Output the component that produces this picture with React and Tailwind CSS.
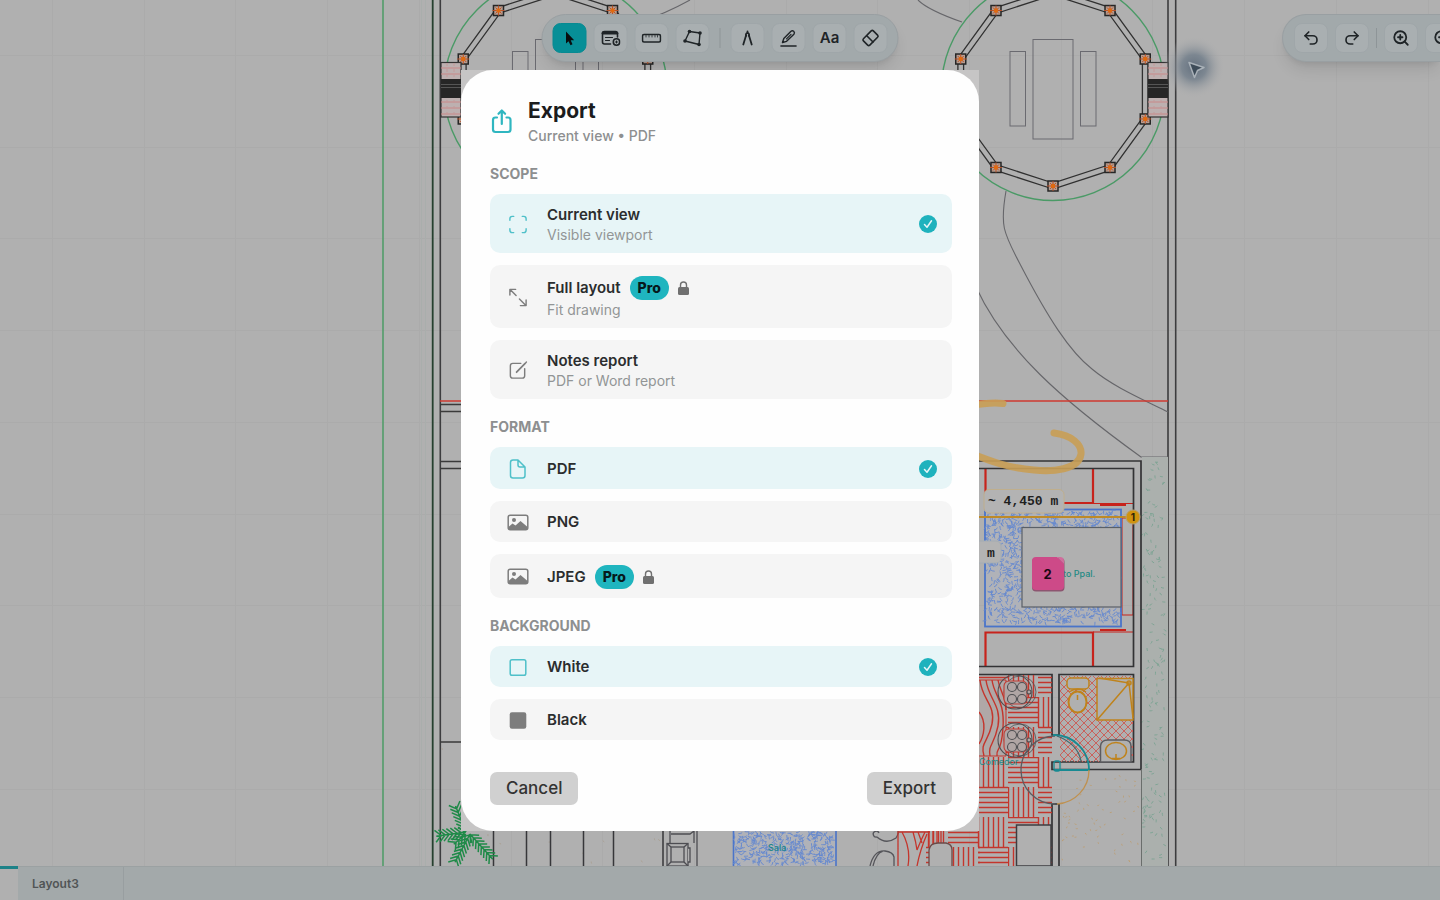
import { useState } from "react";
import { Redo2, Undo2, ZoomIn, ZoomOut } from "lucide-react";

// Small seeded generator so the hatches look the same on every render
const makeRandom = (seed) => {
  let value = seed;
  return () => {
    value = (value * 16807) % 2147483647;
    return value / 2147483647;
  };
};

const scatter = (x, y, width, height, count, length, seed) => {
  const random = makeRandom(seed);
  let d = "";
  for (let i = 0; i < count; i++) {
    const px = x + random() * (width - length);
    const py = y + random() * (height - length);
    const angle = random() * Math.PI;
    const dx = Math.cos(angle) * length;
    const dy = Math.sin(angle) * length;
    d += `M${px.toFixed(1)} ${py.toFixed(1)}q${(dx * 0.2).toFixed(1)} ${(
      dy * 0.8
    ).toFixed(1)} ${dx.toFixed(1)} ${dy.toFixed(1)}`;
  }
  return d;
};

const bigCarpet = scatter(986, 510, 136, 116, 1350, 4, 77);
const smallCarpet = scatter(734, 831, 104, 36, 380, 4, 31);
const gardenDots = scatter(1143, 460, 25, 404, 170, 3, 9);
const patioDots = scatter(1062, 775, 78, 88, 60, 2, 15);
const floorDots = scatter(442, 745, 220, 120, 60, 2, 23);

const gridX = Array.from({ length: 16 }, (_, i) => Math.round(52 + i * 91.7));
const gridY = Array.from({ length: 9 }, (_, i) => Math.round(55 + i * 91.7));

const polygonPoints = (cx, cy, radius) =>
  Array.from({ length: 10 }, (_, i) => {
    const angle = ((i * 36 + 90) * Math.PI) / 180;
    return [cx + radius * Math.cos(angle), cy + radius * Math.sin(angle)];
  });

function Gazebo({ cx, cy }) {
  const posts = polygonPoints(cx, cy, 97);
  return (
    <g fill="none">
      <circle cx={cx} cy={cy} r="111.5" stroke="#4a9a66" strokeWidth="1.4" />
      <g stroke="#303030" strokeWidth="1.3">
        <polygon points={polygonPoints(cx, cy, 100).join(" ")} />
        <polygon points={polygonPoints(cx, cy, 94).join(" ")} />
      </g>
      <g stroke="#6a6a70" strokeWidth="1">
        <rect x={cx - 20} y="39.5" width="40" height="99.5" />
        <rect x={cx - 43} y="51.5" width="15.5" height="74.5" />
        <rect x={cx + 27.5} y="51.5" width="15.5" height="74.5" />
      </g>
      {posts.map(([x, y]) => (
        <g key={`${x}-${y}`}>
          <rect
            x={x - 5}
            y={y - 5}
            width="10"
            height="10"
            fill="#b59c90"
            stroke="#262626"
            strokeWidth="1.5"
          />
          <path
            d={`M${x - 6} ${y}h12M${x} ${y - 5}v10M${x - 3} ${y - 3}l6 6M${
              x + 3
            } ${y - 3}l-6 6`}
            stroke="#b8532a"
            strokeWidth="1"
          />
          <circle cx={x} cy={y} r="2.2" fill="#e06a10" />
        </g>
      ))}
    </g>
  );
}

function Gate({ x }) {
  return (
    <g>
      <rect x={x} y="62.5" width="20" height="54.5" fill="#bdb0b0" stroke="#333" strokeWidth="1.2" />
      <path
        d={`M${x} 68h20M${x} 74h20M${x} 102h20M${x} 108h20M${x} 114h20`}
        stroke="#c98888"
        strokeWidth="1"
      />
      <path
        d={`M${x + 6} 63v14M${x + 13} 63v14M${x + 6} 100v16M${x + 13} 100v16`}
        stroke="#c49a9a"
        strokeWidth="1"
        strokeDasharray="3 3"
      />
      <rect x={x} y="79" width="20" height="19" fill="#262626" />
      <path d={`M${x} 84.500h20M${x} 87.500h20`} stroke="#555" strokeWidth="1" />
    </g>
  );
}

function Stove({ cx, cy }) {
  return (
    <g fill="#b0a5a4" stroke="#4f4f52" strokeWidth="1.1">
      <circle cx={cx} cy={cy} r="17" fill="none" />
      <circle cx={cx + 5} cy={cy} r="16" fill="none" strokeWidth="0.8" />
      <rect x={cx - 11} y={cy - 11} width="23" height="23" rx="5" stroke="#c03c34" />
      <circle cx={cx - 3} cy={cy - 5} r="4.500" />
      <circle cx={cx + 7} cy={cy - 5} r="4.500" />
      <circle cx={cx - 3} cy={cy + 7} r="4.500" />
      <circle cx={cx + 7} cy={cy + 7} r="4.500" />
      <circle cx={cx + 14} cy={cy} r="2" />
    </g>
  );
}

function Frond({ x, y, angle, size = 28 }) {
  const steps = Math.floor(size / 4);
  let d = `M0 0H${size}`;
  for (let i = 1; i <= steps; i++) {
    d += `M${i * 4 - 3} 0l6 -6M${i * 4 - 3} 0l6 6`;
  }
  return (
    <path
      d={d}
      transform={`translate(${x} ${y}) rotate(${angle})`}
      fill="none"
      stroke="#1f8a48"
      strokeWidth="1.500"
    />
  );
}

function FloorPlan() {
  return (
    <svg
      className="absolute inset-0 h-full w-full"
      viewBox="0 0 1440 866"
      preserveAspectRatio="xMidYMin slice"
      aria-hidden="true"
    >
      <defs>
        <pattern id="parquet" x="1008" y="757" width="60" height="60" patternUnits="userSpaceOnUse">
          <path
            d="M0 .5H30M0 5.500H30M0 10.500H30M0 15.500H30M0 20.500H30M0 25.500H30M30 30.500H60M30 35.500H60M30 40.500H60M30 45.500H60M30 50.500H60M30 55.500H60M30.500 0V30M35.500 0V30M40.500 0V30M45.500 0V30M50.500 0V30M55.500 0V30M.5 30V60M5.500 30V60M10.500 30V60M15.500 30V60M20.500 30V60M25.500 30V60"
            stroke="#c4352c"
            strokeWidth="1.400"
          />
        </pattern>
        <pattern id="tiles" x="1060" y="675" width="8" height="8" patternUnits="userSpaceOnUse">
          <path d="M0 0l8 8M8 0l-8 8" stroke="#c9625c" strokeWidth="1" />
        </pattern>
        <radialGradient id="glow">
          <stop offset="0" stopColor="#64707e" />
          <stop offset="0.4" stopColor="#74808c" stopOpacity="0.85" />
          <stop offset="1" stopColor="#b0b0b0" stopOpacity="0" />
        </radialGradient>
      </defs>

      {/* Grid */}
      <g stroke="#ababab" strokeWidth="1">
        {gridX.map((x) => (
          <line key={x} x1={x + 0.5} x2={x + 0.5} y1="0" y2="866" />
        ))}
        {gridY.map((y) => (
          <line key={y} x1="0" x2="1440" y1={y + 0.5} y2={y + 0.5} />
        ))}
      </g>

      {/* Plot limits */}
      <path d="M383 0V866" stroke="#459a60" strokeWidth="1.400" />
      <path d="M421.500 0V866M425.500 0V866" stroke="#a9aeac" strokeWidth="1" />
      <path d="M432.700 0V866" stroke="#26402f" strokeWidth="1.800" />
      <path d="M440.300 0V866M1168 0V866M1175.700 0V866" stroke="#3c3c3e" strokeWidth="1.600" />

      <Gazebo cx={555.5} cy={89} />
      <Gazebo cx={1053} cy={89} />
      <Gate x={441} />
      <Gate x={1148} />

      {/* Paths */}
      <g fill="none" stroke="#66666a" strokeWidth="1.100">
        <path d="M690 0C672 10 658 16 640 22" />
        <path d="M918 0C926 8 942 15 962 22" />
        <path d="M1006 191C1000 225 1003 232 1020 264C1048 318 1070 352 1092 369C1112 386 1142 399 1168 412" />
        <path d="M976 287C1005 350 1062 400 1141 457H1168" />
      </g>
      <path d="M440 401H1168" stroke="#cf3a30" strokeWidth="1.300" />
      <path d="M440 404.500H470M440 411.500H470M440 461.500H470M440 468.500H470M440 742H470" stroke="#3a3a3a" strokeWidth="1.300" />

      <path d={floorDots} fill="none" stroke="#a89d8e" strokeWidth="0.800" />
      <path d="M1142 457H1168V866H1142Z" fill="#abb0ad" />
      <path d={gardenDots} fill="none" stroke="#7ba392" strokeWidth="0.900" />
      <path d={patioDots} fill="none" stroke="#bd9c6e" strokeWidth="0.800" />

      {/* Bedroom */}
      <g fill="none" stroke="#c7231c">
        <path d="M985.500 468V503H1093V468M985.500 666V632.500H1093V666" strokeWidth="2.200" />
        <path d="M1093 503.500H1133M1093 632H1133M1122 518H1133V615H1122Z" strokeWidth="1" />
        <path d="M1100 505H1126M1100 630H1126" strokeWidth="2.200" />
      </g>
      <rect x="985" y="509.500" width="136" height="117" fill="#b0b2b8" stroke="#4a74c9" strokeWidth="1.800" />
      <path d={bigCarpet} fill="none" stroke="#6488cf" strokeWidth="0.900" />
      <rect x="1022" y="527.500" width="99" height="79.500" fill="#b0b0b0" stroke="#5a6068" strokeWidth="1.200" />
      <text x="1063" y="577" fill="#1f8a84" className="font-['Inter'] text-[9px] font-medium">
        to Ppal.
      </text>

      {/* Walls */}
      <g fill="none" stroke="#333335" strokeWidth="1.700">
        <path d="M970 461H1141V769.500H1052V762H1133.500V674.500H1059V735H1052V674.500H970" />
        <path d="M970 468.500H1133.500V666.500H970" />
        <path d="M1052 866V804H1059V866" />
        <path d="M1141.500 769V866" stroke="#6a6e6c" strokeWidth="1" />
      </g>

      {/* Kitchen */}
      <rect x="978" y="675" width="74" height="191" fill="url(#parquet)" />
      <rect x="926" y="831" width="54" height="35" fill="url(#parquet)" />
      <path d="M978 680H1006V756H978Z" fill="#b0a8a7" stroke="#c4352c" />
      <path
        d="M980 680C982 700 996 705 992 724S980 742 984 756M986 680C988 698 1002 706 998 726S988 744 990 756M992 680C994 696 1005 700 1003 728S996 746 997 756M998 680C1000 692 1006 696 1006 710M979 712C987 722 984 736 979 744"
        fill="none"
        stroke="#c4352c"
        strokeWidth="1.400"
      />
      <Stove cx={1015} cy={692} />
      <Stove cx={1015} cy={740} />
      <text x="979" y="765" fill="#228a88" className="font-['Inter'] text-[9px]">
        Comedor
      </text>
      <path d="M1016.500 825H1051V866H1016.500Z" fill="#b0b0b0" stroke="#3d3d40" strokeWidth="1.500" />

      {/* Bathroom */}
      <rect x="1060" y="676" width="73" height="86" fill="url(#tiles)" />
      <g fill="none" stroke="#bf831c" strokeWidth="1.500">
        <rect x="1097" y="678.500" width="36" height="41.500" fill="#b0b0b0" />
        <path d="M1097 720L1129 683L1099 678M1129 683L1133 718" />
        <circle cx="1129" cy="683" r="2" />
        <rect x="1067" y="678" width="22" height="11" rx="4" fill="#b0b0b0" />
        <path d="M1069 692Q1078 686 1086 692" />
        <ellipse cx="1077.500" cy="702" rx="9" ry="10.500" fill="#b0b0b0" strokeWidth="2" />
        <path d="M1077.500 695V700" />
        <path d="M1100.500 762V746Q1101 740 1108 740H1124Q1131 740 1131 746V762Z" fill="#b0b0b0" stroke="#5c5c60" />
        <ellipse cx="1116" cy="751" rx="10.500" ry="8.500" />
        <path d="M1116 754V759M1112 758.500H1120" />
      </g>
      <g fill="none" strokeWidth="1.300">
        <path d="M1055 804A34 34 0 0 1 1055 736" stroke="#5c5c60" />
        <path d="M1053 735A35 35 0 0 1 1089 770H1055" stroke="#188a92" strokeWidth="1.800" />
        <path d="M1089 770A34 34 0 0 1 1057 804" stroke="#bf9150" />
        <path d="M1057 736Q1078 744 1081 761" stroke="#3f6a70" />
        <rect x="1054" y="761" width="6" height="10" rx="2" stroke="#188a92" />
      </g>

      {/* Living room */}
      <path d="M493.500 800V866M526.500 800V866M550.500 800V866M583.500 800V866M613.500 800V866M663 800V866" stroke="#37373a" strokeWidth="1.500" />
      <g fill="#b0b0b0" stroke="#4d4d52" strokeWidth="1.300">
        <path d="M670 820V866M697 820V866M694 820V843M671 834H690L694 831" />
        <rect x="667" y="843.500" width="21" height="22.500" />
        <rect x="671" y="847" width="13" height="15" />
        <path d="M667 843.500L671 847M688 843.500L684 847M667 866L671 862M688 866L684 862M688 848H690V862H688" />
      </g>
      <rect x="733.500" y="825" width="102.500" height="45" fill="#b0b2b8" stroke="#4a74c9" strokeWidth="1.600" />
      <path d={smallCarpet} fill="none" stroke="#6488cf" strokeWidth="0.900" />
      <text x="768" y="851" fill="#1b858c" className="font-['Inter'] text-[9px] font-medium">
        Sala
      </text>
      <g fill="none" stroke="#55555a" strokeWidth="1.300">
        <path d="M877 837a3 3 0 1 1 2 -4M877 837Q886 845 896 838Q900 832 897 829" />
        <path d="M870 866Q874 850 885 851Q893 852 894 857V866M873 866Q876 853 883 851" />
      </g>
      <g fill="none" stroke="#c4352c" strokeWidth="1.300">
        <path d="M898 866V832H930M902 832Q911 848 908 866M913 832Q916 842 917 850Q921 840 925 832M918 832L922 843M917 866Q920 850 927 834M929 831V846M933 831V845M937 831V845M941 831V845" />
      </g>
      <path d="M929 866V850Q930 843 938 843H946Q952 844 952 850V866" fill="#b0b0b0" stroke="#6b4a48" strokeWidth="1.300" />

      {/* Palm */}
      <Frond x={466} y={832} angle={-112} size={28} />
      <Frond x={466} y={832} angle={172} size={30} />
      <Frond x={470} y={834} angle={118} size={32} />
      <Frond x={470} y={834} angle={48} size={34} />
      <Frond x={466} y={834} angle={140} size={16} />

      {/* Annotations */}
      <g fill="none" stroke="#c99f55" strokeOpacity="0.9" strokeWidth="7" strokeLinecap="round">
        <path d="M970 406Q990 402 1003 403.500" />
        <path d="M1054 433C1072 435 1082 445 1081 454C1079 470 1052 472 1034 470C1008 468 990 461 970 453" />
      </g>
      <path d="M970 517H1128" stroke="#bd8a28" strokeWidth="2.200" />
      <circle cx="1133" cy="517" r="7" fill="#d0930f" stroke="#b8a070" />
      <text x="1133" y="521" textAnchor="middle" fill="#2b2207" className="font-['Inter'] text-[10px] font-bold">
        1
      </text>
      <rect x="984" y="489.500" width="80" height="23.500" rx="5" fill="#b3b3b3" stroke="#bfae8c" />
      <text x="988" y="505" fill="#1f1f1f" className="font-['Liberation_Mono'] text-[13px] font-bold">
        ~ 4,450 m
      </text>
      <rect x="940" y="541" width="61" height="22" rx="5" fill="#b3b3b3" stroke="#a3acb4" />
      <text x="987" y="557" fill="#1f1f1f" className="font-['Liberation_Mono'] text-[13px] font-bold">
        m
      </text>
      <rect x="1032" y="558" width="32.500" height="33.500" rx="4" fill="#8d5570" />
      <path d="M1036 557H1057L1064 564V586Q1064 590 1060 590H1036Q1032 590 1032 586V561Q1032 557 1036 557Z" fill="#cd4a88" />
      <path d="M1057 557L1064 564V561Q1064 557 1060 557Z" fill="#d06c9c" />
      <text x="1047.500" y="578.500" textAnchor="middle" fill="#1c0812" className="font-['Inter'] text-[13px] font-bold">
        2
      </text>

      {/* Remote cursor */}
      <circle cx="1194" cy="67" r="31" fill="url(#glow)" />
      <path d="M1189 62.500L1204 67.500L1197.500 70.500L1194.500 77.500Z" fill="#3e4c59" stroke="#a9b1b8" strokeWidth="1.500" strokeLinejoin="round" />
    </svg>
  );
}

function Glyph({ children }) {
  return (
    <svg
      viewBox="0 0 20 20"
      className="h-5 w-5"
      fill="none"
      stroke="currentColor"
      strokeWidth="1.6"
      strokeLinecap="round"
      strokeLinejoin="round"
      aria-hidden="true"
    >
      {children}
    </svg>
  );
}

function ToolButton({ label, active, children }) {
  return (
    <button
      type="button"
      aria-label={label}
      className={`flex h-[30px] w-[34px] shrink-0 items-center justify-center rounded-lg border text-[#1f2427] ${
        active
          ? "border-[#078a92] bg-[#078f97]"
          : "border-[#9fa6a9] bg-[#a9afb1]"
      }`}
    >
      {children}
    </button>
  );
}

function Toolbars() {
  return (
    <>
      <div className="absolute left-1/2 top-[14px] flex -translate-x-1/2 items-center gap-[7px] rounded-full border border-[#999fa2] bg-[#a2a9ab] px-[10px] py-2 shadow-lg shadow-black/10">
        <ToolButton label="Select" active>
          <Glyph>
            <path d="M6.500 3.500V15.500L9 13.200L11 17.300L13 16.300L11.200 12.300H14.700Z" fill="#080d0e" stroke="none" />
          </Glyph>
        </ToolButton>
        <ToolButton label="Add note">
          <Glyph>
            <path d="M10 16H4Q2 16 2 14V5Q2 3.500 4 3.500H15Q17 3.500 17 5.500V9" />
            <path d="M2.500 5.200H16.500" strokeWidth="2.600" />
            <path d="M5 9.500H12M5 12.500H9" strokeWidth="1.200" />
            <circle cx="16" cy="14" r="3.200" />
            <path d="M16 13V15M15 14H17" strokeWidth="1" />
          </Glyph>
        </ToolButton>
        <ToolButton label="Measure">
          <Glyph>
            <rect x="1" y="6.500" width="18" height="7.500" rx="1.500" />
            <path d="M4.500 7.500V9M7.500 7.500V9M10.500 7.500V9M13.500 7.500V9M16 7.500V9" strokeWidth="0.800" />
          </Glyph>
        </ToolButton>
        <ToolButton label="Area">
          <Glyph>
            <path d="M7 3.500L17.500 5L16.500 16.500L2.500 13Z" strokeWidth="1.400" />
            <g fill="currentColor" stroke="none">
              <circle cx="7" cy="3.500" r="1.800" />
              <circle cx="17.500" cy="5" r="1.800" />
              <circle cx="16.500" cy="16.500" r="1.800" />
              <circle cx="2.500" cy="13" r="1.800" />
            </g>
          </Glyph>
        </ToolButton>
        <span className="mx-[3px] h-5 w-px bg-[#8e9598]" />
        <ToolButton label="Angle">
          <Glyph>
            <path d="M5.800 16.500L8.700 7M14.200 16.500L11.300 7M10 3.500V5" strokeWidth="1.800" />
            <path d="M8.500 8Q7.800 5 10 5Q12.200 5 11.500 8" />
          </Glyph>
        </ToolButton>
        <ToolButton label="Draw">
          <Glyph>
            <path d="M2.500 18H17.500" />
            <path d="M4 14.500L5.300 10.500L12.500 3.300Q13.800 2.200 15.200 3.300Q16.600 4.800 15.400 6.200L8.100 13.300Z" strokeWidth="1.400" />
            <path d="M8 10.800L12.500 6.300" strokeWidth="1.200" />
          </Glyph>
        </ToolButton>
        <ToolButton label="Text">
          <span className="font-['Inter'] text-[15px] font-semibold leading-5">Aa</span>
        </ToolButton>
        <ToolButton label="Erase">
          <Glyph>
            <rect x="5.500" y="3" width="9" height="14" rx="1.500" transform="rotate(45 10 10)" />
            <path d="M6.500 8L12.500 14" />
          </Glyph>
        </ToolButton>
      </div>

      <div className="absolute right-0 top-[14px] flex w-[158px] items-center gap-[7px] overflow-hidden rounded-l-full border border-r-0 border-[#999fa2] bg-[#a2a9ab] py-2 pl-[11px] shadow-lg shadow-black/10">
        <ToolButton label="Undo">
          <Undo2 size={18} strokeWidth={2.2} />
        </ToolButton>
        <ToolButton label="Redo">
          <Redo2 size={18} strokeWidth={2.2} />
        </ToolButton>
        <span className="h-5 w-px shrink-0 bg-[#8e9598]" />
        <ToolButton label="Zoom in">
          <ZoomIn size={18} strokeWidth={2.4} />
        </ToolButton>
        <ToolButton label="Zoom out">
          <ZoomOut size={18} strokeWidth={2.4} />
        </ToolButton>
      </div>
    </>
  );
}

const icons = {
  view: (
    <svg viewBox="0 0 22 22" className="h-[21px] w-[22px]" fill="none" stroke="currentColor" strokeWidth="1.5" strokeLinecap="round">
      <path d="M2.500 6.500V5Q2.500 2.500 5 2.500H6.500M15.500 2.500H17Q19.500 2.500 19.500 5V6.500M19.500 15.500V17Q19.500 19.500 17 19.500H15.500M6.500 19.500H5Q2.500 19.500 2.500 17V15.500" />
    </svg>
  ),
  expand: (
    <svg viewBox="0 0 22 22" className="h-[21px] w-[22px]" fill="none" stroke="currentColor" strokeWidth="1.5" strokeLinecap="round" strokeLinejoin="round">
      <path d="M2.500 8.500V2.500H8.500M3 3L9 9M19.500 13.500V19.500H13.500M19 19L12.500 12.500" />
    </svg>
  ),
  note: (
    <svg viewBox="0 0 22 22" className="h-[21px] w-[22px]" fill="none" stroke="currentColor" strokeWidth="1.5" strokeLinecap="round" strokeLinejoin="round">
      <path d="M14 3.500H5.500Q3 3.500 3 6V16.500Q3 19 5.500 19H15.500Q18 19 18 16.500V9" />
      <path d="M9.500 12.800L18.500 3.500" strokeWidth="1.800" />
      <path d="M19.200 2.800L19.800 2.200" />
    </svg>
  ),
  file: (
    <svg viewBox="0 0 22 22" className="h-[22px] w-[22px]" fill="none" stroke="currentColor" strokeWidth="1.500" strokeLinejoin="round">
      <path d="M11 2H6Q3.500 2 3.500 4.500V17.500Q3.500 20 6 20H15.500Q18 20 18 17.500V9L11 2V7Q11 9 13 9H18" />
    </svg>
  ),
  image: (
    <svg viewBox="0 0 22 21" className="h-[21px] w-[22px]" fill="none">
      <rect x="1.200" y="3.200" width="19.600" height="14.600" rx="2" stroke="currentColor" strokeWidth="1.500" />
      <circle cx="7" cy="8" r="2" fill="currentColor" />
      <path d="M2 17.500V14.500L5.500 11.500L8.500 13.500L13.500 9L20 14.500V17.500Z" fill="currentColor" />
    </svg>
  ),
  square: (
    <svg viewBox="0 0 22 21" className="h-[21px] w-[22px]" fill="none">
      <rect x="3.200" y="2.700" width="15.600" height="15.600" rx="1.800" stroke="currentColor" strokeWidth="1.500" />
    </svg>
  ),
  squareFilled: (
    <svg viewBox="0 0 22 21" className="h-[21px] w-[22px]">
      <rect x="2.700" y="2.200" width="16.600" height="16.600" rx="2.200" fill="currentColor" />
    </svg>
  ),
};

const sections = [
  {
    name: "scope",
    title: "SCOPE",
    options: [
      { id: "current", label: "Current view", hint: "Visible viewport", icon: "view" },
      { id: "full", label: "Full layout", hint: "Fit drawing", icon: "expand", pro: true },
      { id: "notes", label: "Notes report", hint: "PDF or Word report", icon: "note" },
    ],
  },
  {
    name: "format",
    title: "FORMAT",
    options: [
      { id: "pdf", label: "PDF", icon: "file" },
      { id: "png", label: "PNG", icon: "image" },
      { id: "jpeg", label: "JPEG", icon: "image", pro: true },
    ],
  },
  {
    name: "background",
    title: "BACKGROUND",
    options: [
      { id: "white", label: "White", icon: "square" },
      { id: "black", label: "Black", icon: "squareFilled" },
    ],
  },
];

function Option({ name, option, checked, onChange }) {
  return (
    <label
      className={`flex cursor-pointer items-center gap-[18px] rounded-[10px] pb-[9px] pl-[17px] pr-[15px] pt-[11px] ${
        checked ? "bg-[#e7f5f7]" : "bg-[#f5f5f5]"
      }`}
    >
      <input
        type="radio"
        name={name}
        value={option.id}
        checked={checked}
        onChange={onChange}
        className="sr-only"
      />
      <span className={checked ? "text-[#4fc0c9]" : "text-[#7d7d7d]"}>
        {icons[option.icon]}
      </span>
      <span className="flex-1">
        <span className="flex items-center gap-[9px] text-[15px] font-semibold leading-5 text-[#2b2d2e]">
          {option.label}
          {option.pro && (
            <>
              <span className="rounded-full bg-[#1fb5bf] px-2 text-[14px] font-extrabold leading-6 text-[#061a1c]">
                Pro
              </span>
              <svg viewBox="0 0 11 14" className="h-[14px] w-[11px] text-[#707070]" aria-label="Locked">
                <rect y="6" width="11" height="8" rx="1.500" fill="currentColor" />
                <path d="M2.500 6.500V4Q2.500 1 5.500 1Q8.500 1 8.500 4V6.500" fill="none" stroke="currentColor" strokeWidth="1.400" />
              </svg>
            </>
          )}
        </span>
        {option.hint && (
          <span className="block text-[14px] leading-[19px] text-[#929596]">
            {option.hint}
          </span>
        )}
      </span>
      {checked && (
        <svg viewBox="0 0 18 18" className="h-[18px] w-[18px]" aria-hidden="true">
          <circle cx="9" cy="9" r="9" fill="#1fb2bd" />
          <path d="M5.500 9.500L8 12.200L12.500 5.800" fill="none" stroke="#e7f5f7" strokeWidth="1.500" strokeLinecap="round" strokeLinejoin="round" />
        </svg>
      )}
    </label>
  );
}

function ExportDialog() {
  const [values, setValues] = useState({
    scope: "current",
    format: "pdf",
    background: "white",
  });

  const handleChange = (name, id) => {
    setValues((prev) => ({ ...prev, [name]: id }));
  };

  return (
    <div className="fixed inset-0 flex items-center justify-center">
      <div className="w-full max-w-[518px] bg-[#c6c5c5]">
        <div
          role="dialog"
          aria-labelledby="export-title"
          className="rounded-[32px] bg-[#fefefe] pb-[26px] pl-[29px] pr-[27px] pt-[27px]"
        >
          <div className="flex items-center gap-4">
            <svg viewBox="0 0 22 26" className="h-[26px] w-[22px] text-[#2fb6c0]" fill="none" stroke="currentColor" strokeWidth="2.200" strokeLinecap="round" strokeLinejoin="round" aria-hidden="true">
              <path d="M7 9.500H5.500Q3 9.500 3 12V21.500Q3 24 5.500 24H18Q20.500 24 20.500 21.500V12Q20.500 9.500 18 9.500H16.500" />
              <path d="M11.800 16V3M8.500 5.800L11.800 2.500L15.100 5.800" />
            </svg>
            <div>
              <h2 id="export-title" className="text-[21px] font-bold leading-7 text-[#1b1c1d]">
                Export
              </h2>
              <p className="text-[14px] font-medium leading-[21px] text-[#8d8f90]">
                Current view • PDF
              </p>
            </div>
          </div>

          {sections.map((section) => (
            <fieldset key={section.name} className="mt-[18px]">
              <legend className="text-[14px] font-bold leading-5 text-[#8d8f90]">
                {section.title}
              </legend>
              <div className="mt-[10px] flex flex-col gap-3">
                {section.options.map((option) => (
                  <Option
                    key={option.id}
                    name={section.name}
                    option={option}
                    checked={values[section.name] === option.id}
                    onChange={() => handleChange(section.name, option.id)}
                  />
                ))}
              </div>
            </fieldset>
          ))}

          <div className="mt-8 flex justify-between">
            <button type="button" className="rounded-[7px] bg-[#d0d0d0] px-4 text-[17px] font-medium leading-[33px] text-[#333]">
              Cancel
            </button>
            <button type="button" className="rounded-[7px] bg-[#d0d0d0] px-4 text-[17px] font-medium leading-[33px] text-[#333]">
              Export
            </button>
          </div>
        </div>
      </div>
    </div>
  );
}

export default function App() {
  return (
    <div className="flex h-screen flex-col overflow-hidden bg-[#b0b0b0] font-['Inter',sans-serif]">
      <main className="relative flex-1 overflow-hidden">
        <FloorPlan />
        <Toolbars />
      </main>
      <nav className="flex h-[34px] border-t border-[#9ba1a2] bg-[#a3a9aa]">
        <div className="-mt-px w-[18px] border-t-[3px] border-[#1d8288] bg-[#b0b0b0]" />
        <button
          type="button"
          className="w-[106px] border-r border-[#989ea0] pl-[14px] text-left text-[12px] font-semibold text-[#515556]"
        >
          Layout3
        </button>
      </nav>
      <ExportDialog />
    </div>
  );
}
